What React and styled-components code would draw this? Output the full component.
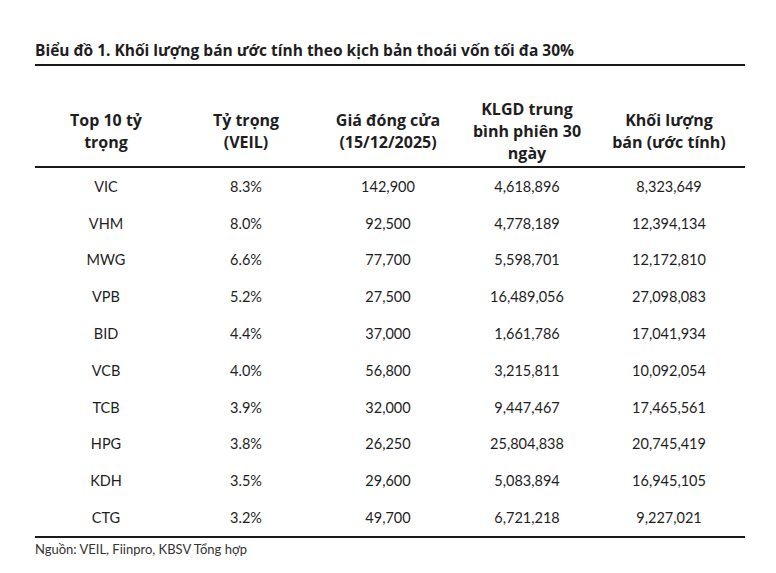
import React from 'react';
import styled, { createGlobalStyle } from 'styled-components';

// GLOBAL
const GlobalStyle = createGlobalStyle`
    body {
        margin: 0;
        background: #fff;
        font-family: Lato, "Noto Sans", sans-serif;
        color: #1e1e1e;
    }
`;

// STYLED COMPONENTS
const Page = styled.div`
    width: 776px;
    height: 573px;
    padding: 40px 31px 0 35px;
    box-sizing: border-box;
`;

const Title = styled.div`
    font-family: "Open Sans", sans-serif;
    font-size: 15.5px;
    font-weight: 700;
    line-height: 21px;
    padding-bottom: 3px;
    border-bottom: 2px solid #1a1a1a;
`;

const Table = styled.div`
    display: grid;
    grid-template-columns: 142px 138px 146px 132px 152px;
    margin-top: 30px;
    border-bottom: 2px solid #1a1a1a;
`;

const HeaderCell = styled.div`
    display: flex;
    align-items: center;
    justify-content: center;
    text-align: center;
    font-family: "Open Sans", sans-serif;
    font-size: 16px;
    font-weight: 700;
    line-height: 22px;
    height: 70px;
    border-bottom: 2px solid #1a1a1a;
`;

const Cell = styled.div`
    display: flex;
    align-items: center;
    justify-content: center;
    height: 36.8px;
    font-size: 14.5px;
`;

const Source = styled.div`
    font-size: 13px;
    color: #333;
    margin-top: 3px;
`;

// DATA
const headers = [
    ['Top 10 tỷ', 'trọng'],
    ['Tỷ trọng', '(VEIL)'],
    ['Giá đóng cửa', '(15/12/2025)'],
    ['KLGD trung', 'bình phiên 30', 'ngày'],
    ['Khối lượng', 'bán (ước tính)'],
];

const rows = [
    ['VIC', '8.3%', '142,900', '4,618,896', '8,323,649'],
    ['VHM', '8.0%', '92,500', '4,778,189', '12,394,134'],
    ['MWG', '6.6%', '77,700', '5,598,701', '12,172,810'],
    ['VPB', '5.2%', '27,500', '16,489,056', '27,098,083'],
    ['BID', '4.4%', '37,000', '1,661,786', '17,041,934'],
    ['VCB', '4.0%', '56,800', '3,215,811', '10,092,054'],
    ['TCB', '3.9%', '32,000', '9,447,467', '17,465,561'],
    ['HPG', '3.8%', '26,250', '25,804,838', '20,745,419'],
    ['KDH', '3.5%', '29,600', '5,083,894', '16,945,105'],
    ['CTG', '3.2%', '49,700', '6,721,218', '9,227,021'],
];

// COMPONENT DEFINITION
const App = () =>
{
    return (
        <Page>
            <GlobalStyle />

            <Title>Biểu đồ 1. Khối lượng bán ước tính theo kịch bản thoái vốn tối đa 30%</Title>

            <Table>
                {headers.map((lines, i) => (
                    <HeaderCell key={'h' + i}>
                        <div>
                            {lines.map((line, j) => (
                                <div key={j}>{line}</div>
                            ))}
                        </div>
                    </HeaderCell>
                ))}

                {rows.map((row, r) =>
                    row.map((value, c) => (
                        <Cell key={r + '-' + c}>{value}</Cell>
                    ))
                )}
            </Table>

            <Source>Nguồn: VEIL, Fiinpro, KBSV Tổng hợp</Source>
        </Page>
    );
};

export default App;
